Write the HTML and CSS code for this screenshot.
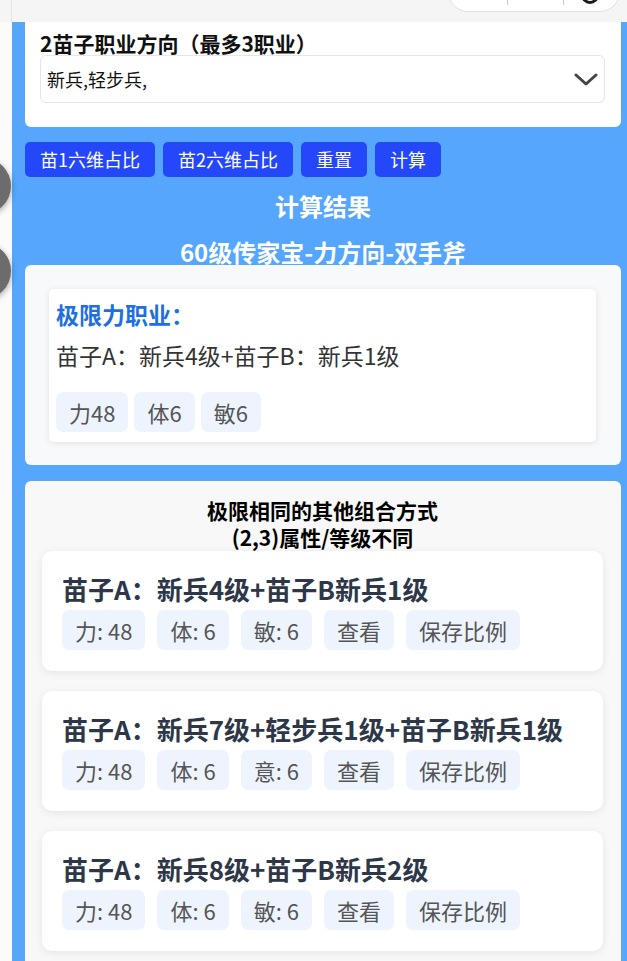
FILE: index.html
```html
<!DOCTYPE html>
<html lang="zh-CN">
<head>
<meta charset="utf-8">
<title>苗子职业计算</title>
<link rel="stylesheet" href="styles.css">
</head>
<body>
<header class="topbar">
  <div class="topbar-side"></div>
  <div class="topbar-main">
    <div class="pill">
      <span class="pill-seg"></span>
      <span class="pill-seg"></span>
      <span class="pill-seg pill-last"><span class="pill-dot"></span></span>
    </div>
  </div>
</header>
<div class="layout">
  <aside class="rail">
    <span class="fab fab-1"></span>
    <span class="fab fab-2"></span>
  </aside>
  <main class="main">
    <section class="card card-form">
      <div class="field-label">2苗子职业方向（最多3职业）</div>
      <div class="select">
        <span class="select-value">新兵,轻步兵,</span>
        <svg class="chevron" width="24" height="13" viewBox="0 0 24 13"><polyline points="2,2 12,11 22,2" fill="none" stroke="#444" stroke-width="3" stroke-linecap="round" stroke-linejoin="round"/></svg>
      </div>
    </section>

    <div class="actions">
      <button class="btn">苗1六维占比</button>
      <button class="btn">苗2六维占比</button>
      <button class="btn">重置</button>
      <button class="btn">计算</button>
    </div>

    <h2 class="result-title">计算结果</h2>
    <h2 class="result-sub">60级传家宝-力方向-双手斧</h2>

    <section class="card card-result">
      <div class="best">
        <h3 class="best-title">极限力职业：</h3>
        <p class="best-combo">苗子A：新兵4级+苗子B：新兵1级</p>
        <div class="tags tags-best">
          <span class="tag">力48</span>
          <span class="tag">体6</span>
          <span class="tag">敏6</span>
        </div>
      </div>
    </section>

    <section class="card card-alt">
      <h3 class="alt-title">极限相同的其他组合方式<br>(2,3)属性/等级不同</h3>
      <div class="alt-list">
        <div class="alt-item">
          <div class="alt-name">苗子A：新兵4级+苗子B新兵1级</div>
          <div class="tags tags-alt">
            <span class="tag">力: 48</span>
            <span class="tag">体: 6</span>
            <span class="tag">敏: 6</span>
            <span class="tag">查看</span>
            <span class="tag">保存比例</span>
          </div>
        </div>
        <div class="alt-item">
          <div class="alt-name">苗子A：新兵7级+轻步兵1级+苗子B新兵1级</div>
          <div class="tags tags-alt">
            <span class="tag">力: 48</span>
            <span class="tag">体: 6</span>
            <span class="tag">意: 6</span>
            <span class="tag">查看</span>
            <span class="tag">保存比例</span>
          </div>
        </div>
        <div class="alt-item">
          <div class="alt-name">苗子A：新兵8级+苗子B新兵2级</div>
          <div class="tags tags-alt">
            <span class="tag">力: 48</span>
            <span class="tag">体: 6</span>
            <span class="tag">敏: 6</span>
            <span class="tag">查看</span>
            <span class="tag">保存比例</span>
          </div>
        </div>
      </div>
    </section>
  </main>
</div>
</body>
</html>
```

FILE: styles.css
```css
* { box-sizing: border-box; }

html, body {
  margin: 0;
  padding: 0;
}

body {
  font-family: "Noto Sans CJK SC", "Noto Sans", sans-serif;
  background: #fbfbfb;
  color: #222;
  overflow: hidden;
}

/* top strip */
.topbar {
  display: flex;
  height: 22px;
  background: #f5f5f5;
  overflow: hidden;
}
.topbar-side {
  width: 12px;
  border-right: 1px solid #e4e4e4;
}
.topbar-main {
  flex: 1;
  display: flex;
  justify-content: flex-end;
  align-items: flex-start;
  padding-right: 7px;
}
.pill {
  display: flex;
  align-items: center;
  width: 172px;
  height: 40px;
  margin-top: -28px;
  background: #fff;
  border: 1px solid #e0e0e0;
  border-radius: 20px;
}
.pill-seg {
  position: relative;
  width: 59px;
  height: 100%;
}
.pill-seg::after {
  content: "";
  position: absolute;
  right: 0;
  top: 12px;
  width: 1px;
  height: 20px;
  background: #c8c8c8;
}
.pill-seg:nth-child(2) { width: 56px; }
.pill-last { flex: 1; }
.pill-last::after { display: none; }
.pill-dot {
  position: absolute;
  left: 17px;
  top: 13px;
  width: 18px;
  height: 18px;
  border: 3px solid #1a1a1a;
  border-radius: 50%;
}

/* layout */
.layout {
  display: flex;
}
.rail {
  position: relative;
  width: 12px;
  flex: none;
  background: #fbfbfb;
}
.fab {
  position: absolute;
  left: -45px;
  width: 56px;
  height: 56px;
  border-radius: 50%;
  background: #6c6c6c;
  box-shadow: 0 2px 6px rgba(0, 0, 0, 0.35);
}
.fab-1 { top: 136px; }
.fab-2 { top: 221px; }

.main {
  flex: 1;
  background: #55a6fc;
  padding: 0 6px 0 13px;
  min-height: 960px;
}

.card {
  border-radius: 6px;
}

/* form card */
.card-form {
  background: #fff;
  border-radius: 0 0 6px 6px;
  padding: 9px 16px 24px 15px;
}
.field-label {
  font-size: 21px;
  font-weight: 700;
  line-height: 24px;
  color: #111;
}
.select {
  display: flex;
  align-items: center;
  justify-content: space-between;
  height: 48px;
  border: 1px solid #e6e6e6;
  border-radius: 6px;
  padding: 0 6px 0 6px;
  background: #fff;
}
.select-value {
  font-size: 18px;
  color: #111;
}
.chevron { display: block; }

/* actions */
.actions {
  display: flex;
  gap: 8px;
  margin-top: 15px;
}
.btn {
  height: 35px;
  padding: 0 15px;
  border: none;
  border-radius: 5px;
  background: #2447f9;
  color: #fff;
  font-family: inherit;
  font-size: 18px;
  line-height: 35px;
}

/* result headings */
.result-title,
.result-sub {
  margin: 0;
  font-size: 24px;
  font-weight: 700;
  line-height: 24px;
  color: #fff;
  text-align: center;
}
.result-title { margin-top: 17px; }
.result-sub { margin-top: 22px; }

/* best card */
.card-result {
  margin-top: 1px;
  background: #f7f9fb;
  padding: 24px 25px 23px 24px;
}
.best {
  background: #fff;
  border-radius: 5px;
  box-shadow: 0 1px 6px rgba(0, 0, 0, 0.1);
  padding: 10px 8px 10px 7px;
}
.best-title {
  margin: 0;
  font-size: 23px;
  font-weight: 700;
  line-height: 30px;
  color: #1e6fe0;
}
.best-combo {
  margin: 11px 0 0;
  font-size: 23px;
  line-height: 31px;
  color: #333;
}

.tags {
  display: flex;
  flex-wrap: wrap;
}
.tags-best {
  gap: 6px;
  margin-top: 21px;
}
.tags-alt {
  gap: 12px;
  margin-top: 4px;
}
.tag {
  display: inline-flex;
  align-items: center;
  height: 40px;
  padding: 0 13px;
  font-size: 22px;
  color: #555;
  background: #eef4fd;
  border-radius: 7px;
}

/* alternatives */
.card-alt {
  margin-top: 16px;
  background: #f8f8f8;
  padding: 16px 18px 20px 17px;
}
.alt-title {
  margin: 0;
  font-size: 21px;
  font-weight: 700;
  line-height: 27px;
  color: #000;
  text-align: center;
}
.alt-list {
  display: flex;
  flex-direction: column;
  gap: 20px;
}
.alt-item {
  background: #fff;
  border-radius: 10px;
  box-shadow: 0 2px 8px rgba(0, 0, 0, 0.08);
  padding: 21px 20px 21px;
}
.alt-name {
  font-size: 26px;
  font-weight: 700;
  line-height: 34px;
  color: #2d3748;
}
```
